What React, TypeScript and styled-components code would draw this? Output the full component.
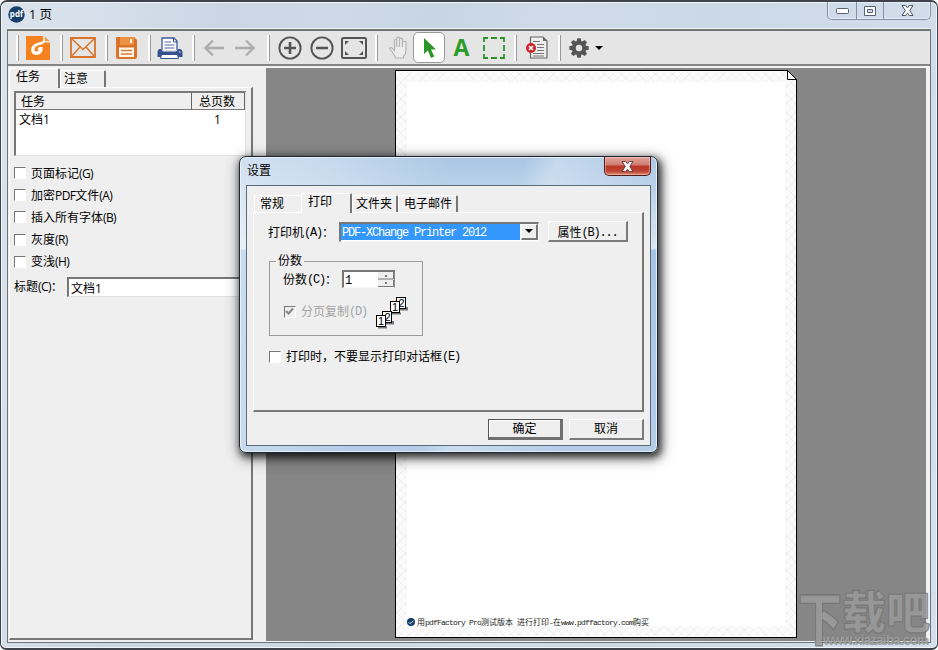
import React from "react";
import styled, { createGlobalStyle, css } from "styled-components";

const GlobalStyle = createGlobalStyle`
  * { box-sizing: border-box; }
  html, body { margin: 0; padding: 0; background: #fff; overflow: hidden; }
  body { font-family: "Liberation Sans", "Noto Sans CJK SC", sans-serif; font-size: 12px; color: #000; }
`;

type Face = "sans" | "mono" | "tiny";

const Latin = styled.span<{ $face: Face }>`
  ${(p) => p.$face === "sans" && css`font-family: "Open Sans", sans-serif; letter-spacing: -0.6px;`}
  ${(p) => p.$face === "mono" && css`font-family: "Liberation Mono", monospace; font-size: 12px; letter-spacing: -1.2px; position: relative; top: -1px;`}
  ${(p) => p.$face === "tiny" && css`font-family: "Liberation Mono", monospace; letter-spacing: -0.8px;`}
`;

const Run = styled.span`
  white-space: pre;
  font-family: "Noto Sans CJK SC", sans-serif;
`;

/* Splits mixed text so that Latin runs get their own face and spacing. */
function Mixed({ text, face = "sans" }: { text: string; face?: Face }) {
  return (
    <Run>
      {text.split(/([\x20-\x7e]+)/).filter(Boolean).map((s, i) =>
        /^[\x20-\x7e]/.test(s) ? <Latin key={i} $face={face}>{s}</Latin> : s
      )}
    </Run>
  );
}

/* ---------- main window ---------- */

const Window = styled.div`
  position: relative;
  width: 938px;
  height: 650px;
  border: 1px solid #3f444c;
  border-top-width: 2px;
  border-bottom-width: 2px;
  border-radius: 7px 7px 6px 6px;
  background: linear-gradient(100deg, #dbe3ec 0, #d5deea 110px, #cbd6e4 220px, #cdd9e6 330px, #c8d5e3 430px, #cfdbe8 560px, #cbd8e6 700px, #d4dfeb 100%);
  box-shadow: inset 0 0 0 1px #f1f5fa;
  padding: 0 6px 0 6px;
  display: flex;
  flex-direction: column;
  overflow: hidden;
`;

const TitleBar = styled.div`
  height: 27px;
  flex: none;
  display: flex;
  align-items: flex-start;
`;

const AppBadge = styled.svg`
  margin: 4px 0 0 1px;
`;

const Title = styled.div`
  margin: 3px 0 0 4px;
  line-height: 19px;
  flex: 1;
  font-family: "Open Sans", "Noto Sans CJK SC", sans-serif;
  font-size: 12.5px;
`;

const Caption = styled.div`
  display: flex;
  width: 104px;
  height: 18px;
  border: 1px solid #8591a1;
  border-top: 0;
  border-radius: 0 0 5px 5px;
  box-shadow: inset 0 0 0 1px #e6ecf4;
  margin-right: 0;
`;

const CaptionButton = styled.div<{ $w: number }>`
  width: ${(p) => p.$w}px;
  display: flex;
  align-items: center;
  justify-content: center;
  & + & { border-left: 1px solid #8591a1; }
`;

const Client = styled.div`
  width: 924px;
  height: 614px;
  flex: none;
  border: 1px solid #6c747b;
  border-top: 2px solid #717871;
  background: #efefef;
  box-shadow: 0 -1px 0 #edf2f7;
  display: flex;
  flex-direction: column;
`;

const Toolbar = styled.div`
  height: 35px;
  flex: none;
  background: #e5e5e5;
  border-bottom: 2px solid #858585;
  display: flex;
  align-items: center;
`;

const Separator = styled.div<{ $gap: number }>`
  width: 3px;
  height: 26px;
  margin-left: ${(p) => p.$gap}px;
  border-left: 2px solid #fcfcfc;
  border-right: 1px solid #9a9a9a;
`;

const Tool = styled.div<{ $gap: number; $w: number; $active?: boolean }>`
  width: ${(p) => p.$w}px;
  height: 31px;
  margin-left: ${(p) => p.$gap}px;
  display: flex;
  align-items: center;
  justify-content: center;
  ${(p) => p.$active && css`background: #fff; border: 1px solid #999; border-radius: 5px;`}
`;

const LetterA = styled.span`
  font: bold 23px/30px "Open Sans", sans-serif;
  color: #2c9c28;
  height: 32px;
`;

const Body = styled.div`
  flex: 1;
  display: flex;
  padding: 2px 4px 1px 0;
  background: #f2f2f2;
`;

const Side = styled.div`
  width: 258px;
  flex: none;
  display: flex;
  flex-direction: column;
  background: #efefef;
`;

const SideTabs = styled.div`
  display: flex;
  align-items: flex-end;
  height: 20px;
  padding-left: 1px;
  position: relative;
  margin-bottom: -1px;
`;

const Tab = styled.div<{ $w: number; $active?: boolean; $h: number; $pad: number; $flat?: boolean }>`
  width: ${(p) => p.$w}px;
  height: ${(p) => p.$h}px;
  padding-left: ${(p) => p.$pad}px;
  line-height: 17px;
  border-top: 1px solid #fff;
  border-left: 1px solid #fff;
  border-right: ${(p) => (p.$flat ? "0" : "2px solid #777")};
  border-radius: 2px 2px 0 0;
  background: #efefef;
  overflow: hidden;
  white-space: nowrap;
  margin-bottom: ${(p) => (p.$active ? 0 : 1)}px;
`;

const SidePanel = styled.div`
  width: 244px;
  height: 553px;
  margin-left: 1px;
  border: 1px solid #fff;
  border-right: 2px solid #777;
  border-bottom: 2px solid #777;
  padding: 3px 5px 0 4px;
`;

const List = styled.div`
  width: 232px;
  height: 65px;
  border: 2px solid #787878;
  border-right: 1px solid #e2e2e2;
  border-bottom: 1px solid #e2e2e2;
  background: #fff;
`;

const ListRow = styled.div`
  display: grid;
  grid-template-columns: 176px 53px;
  height: 17px;
  line-height: 17px;
`;

const HeadCell = styled.div<{ $pad: number }>`
  background: #efefef;
  border-right: 1px solid #666;
  border-bottom: 1px solid #777;
  padding-left: ${(p) => p.$pad}px;
  line-height: 18px;
  overflow: hidden;
`;

const BodyCell = styled.div<{ $pad: number }>`
  padding-left: ${(p) => p.$pad}px;
  line-height: 18px;
`;

const Options = styled.div`
  display: grid;
  grid-auto-rows: 22.2px;
  margin-top: 6px;
`;

const CheckRow = styled.label<{ $dim?: boolean }>`
  display: flex;
  align-items: center;
  gap: 5px;
  line-height: 18px;
  color: ${(p) => (p.$dim ? "#a3a3a3" : "#000")};
  white-space: nowrap;
`;

const Box = styled.span<{ $dim?: boolean }>`
  width: 12px;
  height: 12px;
  flex: none;
  display: flex;
  border-top: 1.5px solid #777;
  border-left: 1.5px solid #777;
  border-right: 1px solid #fff;
  border-bottom: 1px solid #fff;
  background: ${(p) => (p.$dim ? "#efefef" : "#fff")};
`;

const TitleField = styled.div`
  display: flex;
  align-items: center;
  margin-top: 4px;
  line-height: 18px;
  white-space: nowrap;
`;

const TitleInput = styled.div`
  width: 179px;
  height: 20px;
  margin-left: auto;
  border: 2px solid #777;
  border-right: 0;
  border-bottom: 1px solid #e0e0e0;
  background: #fff;
  padding-left: 2px;
  line-height: 17px;
`;

const Viewport = styled.div`
  flex: 1;
  background: #868686;
  padding: 2px 0 0 129px;
`;

const Page = styled.div`
  width: 402px;
  height: 568px;
  border: 1px solid #000;
  padding: 11px;
  position: relative;
  background:
    repeating-linear-gradient(45deg, transparent 0 5px, rgba(120,120,120,0.06) 5px 6px),
    repeating-linear-gradient(-45deg, transparent 0 5px, rgba(120,120,120,0.06) 5px 6px),
    #fbfbfb;
`;

const Paper = styled.div`
  height: 544px;
  background: #fff;
  display: flex;
  align-items: flex-end;
`;

const Fold = styled.svg`
  position: absolute;
  right: -1px;
  top: -1px;
`;

const Footer = styled.div`
  display: flex;
  align-items: center;
  gap: 2px;
  height: 9px;
  font-size: 8px;
  line-height: 9px;
  color: #1b1b1b;
`;

const Watermark = styled.div`
  position: absolute;
  left: 797px;
  top: 585px;
  width: 134px;
  height: 60px;
  display: flex;
  flex-direction: column;
`;

const WatermarkName = styled.div`
  display: flex;
  height: 45px;
  font: 900 44px/46px "Noto Sans CJK SC", sans-serif;
  color: rgba(155, 155, 155, 0.85);
  -webkit-text-stroke: 1px rgba(108, 108, 108, 0.7);
  white-space: nowrap;
`;

const TallGlyph = styled.span`
  transform: scaleY(1.28);
  transform-origin: 0 4px;
`;

const WatermarkUrl = styled.div`
  margin-left: 25px;
  height: 15px;
  font: bold 13px/15px "Liberation Sans", sans-serif;
  letter-spacing: -0.6px;
  color: rgba(165, 165, 165, 0.85);
  text-shadow: 1px 1px 0 rgba(100, 100, 100, 0.5), -1px 0 0 rgba(100, 100, 100, 0.3);
`;

/* ---------- dialog ---------- */

const Dialog = styled.div`
  position: absolute;
  left: 238px;
  top: 154px;
  width: 419px;
  height: 297px;
  border: 1px solid #1d2733;
  border-radius: 7px;
  padding: 0 6px;
  background:
    linear-gradient(110deg, rgba(255,255,255,0.45) 0, rgba(255,255,255,0.3) 90px, rgba(255,255,255,0) 200px, rgba(255,255,255,0) 270px, rgba(255,255,255,0.3) 300px, rgba(255,255,255,0) 400px),
    linear-gradient(180deg, #abc7e5 0, #bed4eb 40px, #d9e5f2 92px, #a5c5e6 93px, #b4cde9 100%);
  box-shadow: inset 0 0 0 1px rgba(235, 244, 253, 0.85), 2px 3px 7px 1px rgba(0, 0, 0, 0.65), 2px 4px 14px 2px rgba(0, 0, 0, 0.45);
`;

const DialogHead = styled.div`
  display: flex;
  justify-content: space-between;
  height: 28px;
  padding-left: 1px;
  line-height: 28px;
`;

const CloseButton = styled.div`
  width: 47px;
  height: 19px;
  border: 1px solid #4d1c18;
  border-top: 0;
  border-radius: 0 0 5px 5px;
  background: linear-gradient(180deg, #dda79f 0, #cf7a6e 8px, #b7372a 9px, #bd4332 14px, #db8a70 100%);
  box-shadow: inset 0 0 0 1px rgba(255, 210, 200, 0.5);
  display: flex;
  align-items: center;
  justify-content: center;
`;

const DialogClient = styled.div`
  width: 405px;
  height: 261px;
  border: 1px solid #5c6a7a;
  background: #efefef;
  padding: 7px 6px 0;
`;

const DialogTabs = styled.div`
  display: flex;
  align-items: flex-end;
  height: 20px;
  padding-left: 1px;
  margin-bottom: -1px;
  position: relative;
`;

const DialogPanel = styled.div`
  width: 391px;
  height: 200px;
  border: 1px solid #fff;
  border-right: 2px solid #777;
  border-bottom: 2px solid #777;
  padding: 8px 14px 0 14px;
`;

const FieldRow = styled.div`
  display: flex;
  align-items: center;
  height: 21px;
  white-space: nowrap;
`;

const Label = styled.span<{ $w: number }>`
  width: ${(p) => p.$w}px;
  flex: none;
`;

const Combo = styled.div`
  width: 200px;
  height: 20px;
  border: 2px solid #777;
  border-right: 1px solid #f8f8f8;
  border-bottom: 1px solid #f8f8f8;
  background: #fff;
  display: flex;
`;

const Selected = styled.div`
  width: 179px;
  height: 16px;
  background: #3397fd;
  color: #fff;
  line-height: 16px;
  padding-left: 1px;
`;

const DropButton = styled.div`
  width: 17px;
  height: 16px;
  margin-left: 1px;
  background: #efefef;
  border: 1px solid #fff;
  border-right: 2px solid #777;
  border-bottom: 2px solid #777;
  display: flex;
  align-items: center;
  justify-content: center;
`;

const Button = styled.div<{ $w: number; $default?: boolean }>`
  width: ${(p) => p.$w}px;
  height: 21px;
  background: #efefef;
  border: 1px solid #fff;
  border-right: 2px solid #7b7b7b;
  border-bottom: 2px solid #7b7b7b;
  text-align: center;
  line-height: 19px;
  white-space: nowrap;
  ${(p) => p.$default && css`
    border: 1px solid #555;
    border-right: 3px solid #707070;
    border-bottom: 3px solid #707070;
    box-shadow: inset 1px 1px 0 #fff;
  `}
`;

const Group = styled.fieldset`
  width: 154px;
  height: 82px;
  margin: 12px 0 0 1px;
  padding: 0 0 0 13px;
  border: 1px solid #9b9b9b;
  min-width: 0;
`;

const Legend = styled.legend`
  margin-left: -7px;
  padding: 0 2px;
  line-height: 14px;
`;

const Spinner = styled.div`
  width: 53px;
  height: 18px;
  border: 2px solid #777;
  border-right: 1px solid #888;
  border-bottom: 1px solid #f8f8f8;
  background: #fff;
  display: flex;
  justify-content: space-between;
  line-height: 16px;
  padding-left: 1px;
`;

const CollateRow = styled.div`
  display: flex;
  justify-content: space-between;
  align-items: flex-end;
  height: 32px;
  margin-top: 8px;
  padding-right: 14px;
`;

const CollateOption = styled.div`
  padding-bottom: 7px;
  margin-left: 1px;
`;

const SkipRow = styled.div`
  margin: 11px 0 0 1px;
`;

const Actions = styled.div`
  display: flex;
  justify-content: flex-end;
  gap: 6px;
  margin: 7px 0 0 0;
`;

/* ---------- drawings ---------- */

const Arrow = ({ flip = false }: { flip?: boolean }) => (
  <svg width="20" height="18" viewBox="0 0 20 18">
    <path d="M9 1.5 1.5 9 9 16.5M1.5 9H20" fill="none" stroke="#adadad" strokeWidth="2.3" transform={flip ? "translate(20 0) scale(-1 1)" : undefined} />
  </svg>
);

const ZoomGlyph = ({ plus = false }: { plus?: boolean }) => (
  <svg width="24" height="24" viewBox="0 0 24 24">
    <circle cx="12" cy="12" r="10.6" fill="none" stroke="#555" strokeWidth="1.9" />
    <path d={plus ? "M6 12H18M12 6V18" : "M6 12H18"} stroke="#555" strokeWidth="2.6" />
  </svg>
);

const CloseGlyph = ({ color = "#4e5765" }: { color?: string }) => (
  <svg width="13" height="11" viewBox="0 0 13 11">
    <path d="M1 .5H4.700L6.500 2.800 8.300.500H12L8.800 5.500 12 10.500H8.300L6.500 8.200 4.700 10.500H1L4.200 5.500Z" fill="#f7f7f7" stroke={color} />
  </svg>
);

const gearTeeth = [0, 45, 90, 135, 180, 225, 270, 315];

function Tools() {
  return (
    <Toolbar>
      <Separator $gap={8} />
      <Tool $gap={7} $w={24}>
        <svg width="24" height="24" viewBox="0 0 24 24">
          <path d="M0 0H17V6.500H24V24H0Z" fill="#f6821f" />
          <path d="M19 .5 23.500 5H19Z" fill="#f79a46" />
          <path d="M19 4C15.500 6.500 10 6 6.500 10C4 13.500 5 18.500 10 19C14.500 19 17.500 15.500 16.500 11H13L11 13.500H13C12.500 15.500 9.500 16.500 8.500 14C8.500 11 11 9.500 13.500 9C16.500 8.500 18.500 7 19 4Z" fill="#fff" />
        </svg>
      </Tool>
      <Separator $gap={10} />
      <Tool $gap={7} $w={26}>
        <svg width="26" height="21" viewBox="0 0 26 21">
          <path d="M1 1H25V20H1Z" fill="none" stroke="#d9722b" strokeWidth="1.800" />
          <path d="M1.500 1.500 13 12.500 24.500 1.500M1.500 19.500 10 10M24.500 19.500 16 10" fill="none" stroke="#d9722b" strokeWidth="1.400" />
        </svg>
      </Tool>
      <Separator $gap={9} />
      <Tool $gap={8} $w={21}>
        <svg width="21" height="22" viewBox="0 0 21 22">
          <path d="M1 0H18L21 3V20Q21 22 19 22H2Q0 22 0 20V1Q0 0 1 0Z" fill="#da7328" />
          <path d="M4 0H18V8H4Z" fill="#ed9243" />
          <path d="M14 2H16V6H14Z" fill="#fff3df" />
          <path d="M3 10.500H18V20H3Z" fill="#fff7ec" />
          <path d="M5 13.500H16M5 17H16" stroke="#dc7c34" strokeWidth="1.300" />
        </svg>
      </Tool>
      <Separator $gap={11} />
      <Tool $gap={6} $w={26}>
        <svg width="26" height="22" viewBox="0 0 26 22">
          <path d="M5 13V1H17L20 4V13" fill="#fff" stroke="#3d5998" strokeWidth="1.300" />
          <path d="M16.500 1V5H20" fill="none" stroke="#3d5998" />
          <path d="M7.500 5H14M7.500 8H17.500M7.500 11H17.500" stroke="#4c66a3" />
          <path d="M2.500 12H4L6 14.500H19L21.500 12H23Q25.500 12.500 25.500 15V20H.5V15Q.5 12.500 2.500 12Z" fill="#35528f" />
          <path d="M4.500 17.500H20.500L21.500 21.500H3.500Z" fill="#fff" stroke="#35528f" />
          <path d="M22 15H23.500" stroke="#fff" strokeWidth="1.200" />
        </svg>
      </Tool>
      <Separator $gap={9} />
      <Tool $gap={9} $w={20}><Arrow /></Tool>
      <Tool $gap={11} $w={20}><Arrow flip /></Tool>
      <Separator $gap={12} />
      <Tool $gap={8} $w={24}><ZoomGlyph plus /></Tool>
      <Tool $gap={8} $w={24}><ZoomGlyph /></Tool>
      <Tool $gap={7} $w={26}>
        <svg width="26" height="22" viewBox="0 0 26 22">
          <rect x="1" y="1" width="24" height="20" rx="1.500" fill="none" stroke="#555" strokeWidth="2" />
          <path d="M4 4H8L4 8ZM18 4H22V8ZM4 14V18H8ZM22 14V18H18Z" fill="#555" />
        </svg>
      </Tool>
      <Separator $gap={8} />
      <Tool $gap={11} $w={19}>
        <svg width="19" height="23" viewBox="0 0 19 23">
          <path d="M6.500 22C5.500 18 2 15 .8 12.500Q1.500 10.500 4 13L5.500 14.500V4Q6.500 2.500 7.700 4V11V2Q9 .2 10.500 2V11V3Q12 1.500 13.500 3V11V6Q15 4.500 17 6V15Q17 18 14.500 20.500V22Z" fill="#ececec" stroke="#b4b4b4" strokeWidth="1.200" />
        </svg>
      </Tool>
      <Tool $gap={5} $w={32} $active>
        <svg width="13" height="20" viewBox="0 0 13 20">
          <path d="M1 0V16L4.800 12.500 8 20 11.300 18.500 8 11.500H13Z" fill="#2b9728" />
        </svg>
      </Tool>
      <Tool $gap={8} $w={17}><LetterA>A</LetterA></Tool>
      <Tool $gap={12} $w={23}>
        <svg width="22" height="22" viewBox="0 0 22 22">
          <path d="M1 5V1H5M8 1H14M17 1H21V5M21 8V14M21 17V21H17M14 21H8M5 21H1V17M1 14V8" fill="none" stroke="#279527" strokeWidth="1.800" />
        </svg>
      </Tool>
      <Separator $gap={9} />
      <Tool $gap={9} $w={22}>
        <svg width="22" height="23" viewBox="0 0 22 23">
          <path d="M4.500 1H17L21 5V22H4.500Z" fill="#eee" stroke="#666" strokeWidth="1.200" />
          <path d="M17 1V5H21Z" fill="#666" />
          <path d="M7 5.500H14M11 8.500H18M11 11.500H18M11 14.500H18M7 17.500H18M7 20H18" stroke="#777" />
          <circle cx="5" cy="12" r="5" fill="#cd2028" />
          <path d="M3 10 7 14M7 10 3 14" stroke="#fff" strokeWidth="1.700" />
        </svg>
      </Tool>
      <Separator $gap={10} />
      <Tool $gap={8} $w={20}>
        <svg width="20" height="20" viewBox="-10 -10 20 20">
          {gearTeeth.map((a) => <path key={a} d="M-2.500-6-1.700-9.700H1.700L2.500-6Z" transform={`rotate(${a})`} fill="#555" />)}
          <circle r="5.200" fill="none" stroke="#555" strokeWidth="4" />
        </svg>
      </Tool>
      <Tool $gap={6} $w={8}>
        <svg width="8" height="4"><path d="M0 0H8L4 4Z" /></svg>
      </Tool>
    </Toolbar>
  );
}

const Digit = styled.text`
  font: 11px "Liberation Sans", sans-serif;
`;

const BadgeText = styled.text`
  font: bold 8px "Open Sans", sans-serif;
  fill: #fff;
`;

const CollateSheets = ({ x, y }: { x: number; y: number }) => (
  <g transform={`translate(${x} ${y})`}>
    <path d="M8 12.500H17V10" fill="none" stroke="#777" strokeWidth="2" />
    <rect x="6.500" y=".5" width="9" height="11" fill="#fff" stroke="#000" />
    <Digit x="8.500" y="10">2</Digit>
    <path d="M2 16.500H11" stroke="#777" strokeWidth="2" />
    <rect x=".5" y="4.500" width="9" height="11" fill="#fff" stroke="#000" />
    <Digit x="2" y="14">1</Digit>
  </g>
);

const options = ["页面标记(G)", "加密PDF文件(A)", "插入所有字体(B)", "灰度(R)", "变浅(H)"];

function SidePane() {
  return (
    <Side>
      <SideTabs>
        <Tab $w={51} $h={20} $pad={6} $active>任务</Tab>
        <Tab $w={46} $h={17} $pad={3}>注意</Tab>
      </SideTabs>
      <SidePanel>
        <List>
          <ListRow>
            <HeadCell $pad={5}>任务</HeadCell>
            <HeadCell $pad={7}>总页数</HeadCell>
          </ListRow>
          <ListRow>
            <BodyCell $pad={3}><Mixed text="文档1" /></BodyCell>
            <BodyCell $pad={22}><Mixed text="1" /></BodyCell>
          </ListRow>
        </List>
        <Options>
          {options.map((o) => (
            <CheckRow key={o}><Box /><Mixed text={o} /></CheckRow>
          ))}
        </Options>
        <TitleField>
          <Mixed text="标题(C)：" />
          <TitleInput><Mixed text="文档1" /></TitleInput>
        </TitleField>
      </SidePanel>
    </Side>
  );
}

function SettingsDialog() {
  return (
    <Dialog>
      <DialogHead>
        <span>设置</span>
        <CloseButton><CloseGlyph color="#713e3c" /></CloseButton>
      </DialogHead>
      <DialogClient>
        <DialogTabs>
          <Tab $w={47} $h={17} $pad={5} $flat>常规</Tab>
          <Tab $w={51} $h={20} $pad={6} $active>打印</Tab>
          <Tab $w={46} $h={17} $pad={3}>文件夹</Tab>
          <Tab $w={60} $h={17} $pad={5}>电子邮件</Tab>
        </DialogTabs>
        <DialogPanel>
          <FieldRow>
            <Label $w={71}><Mixed text="打印机(A)：" face="mono" /></Label>
            <Combo>
              <Selected><Mixed text="PDF-XChange Printer 2012" face="mono" /></Selected>
              <DropButton>
                <svg width="8" height="4"><path d="M0 0H8L4 4Z" /></svg>
              </DropButton>
            </Combo>
            <Label $w={9} />
            <Button $w={80}><Mixed text="属性(B)..." face="mono" /></Button>
          </FieldRow>
          <Group>
            <Legend>份数</Legend>
            <FieldRow>
              <Label $w={59}><Mixed text="份数(C)：" face="mono" /></Label>
              <Spinner>
                <Mixed text="1" face="mono" />
                <svg width="16" height="15">
                  <path d="M0 0H16V15H0Z" fill="#efefef" />
                  <path d="M0 7H15.500V0M0 14.500H15.500V8" fill="none" stroke="#777" />
                  <path d="M7 4H9M7 11H9" stroke="#000" />
                </svg>
              </Spinner>
            </FieldRow>
            <CollateRow>
              <CollateOption>
                <CheckRow $dim>
                  <Box $dim>
                    <svg width="9" height="9"><path d="M1 4 3.500 6.500 8 1.500" fill="none" stroke="#888" strokeWidth="2" /></svg>
                  </Box>
                  <Mixed text="分页复制(D)" face="mono" />
                </CheckRow>
              </CollateOption>
              <svg width="32" height="33">
                <CollateSheets x={14} y={1} />
                <CollateSheets x={0} y={15} />
              </svg>
            </CollateRow>
          </Group>
          <SkipRow>
            <CheckRow><Box /><Mixed text="打印时，不要显示打印对话框(E)" face="mono" /></CheckRow>
          </SkipRow>
        </DialogPanel>
        <Actions>
          <Button $w={75} $default>确定</Button>
          <Button $w={75}>取消</Button>
        </Actions>
      </DialogClient>
    </Dialog>
  );
}

export default function App() {
  return (
    <>
      <GlobalStyle />
      <Window>
        <TitleBar>
          <AppBadge width="17" height="17" viewBox="0 0 17 17">
            <circle cx="8.500" cy="8.500" r="8.200" fill="#173f69" />
            <BadgeText x="1.700" y="11" textLength="13.500">pdf</BadgeText>
          </AppBadge>
          <Title>1 页</Title>
          <Caption>
            <CaptionButton $w={28}>
              <svg width="13" height="6"><rect x=".5" y=".5" width="12" height="5" rx="1" fill="#fff" stroke="#586170" /></svg>
            </CaptionButton>
            <CaptionButton $w={27}>
              <svg width="12" height="10"><path d="M.5.500H11.500V9.500H.5ZM3.500 3.500V6.500H8.500V3.500Z" fill="#fff" fillRule="evenodd" stroke="#586170" /></svg>
            </CaptionButton>
            <CaptionButton $w={47}><CloseGlyph /></CaptionButton>
          </Caption>
        </TitleBar>
        <Client>
          <Tools />
          <Body>
            <SidePane />
            <Viewport>
              <Page>
                <Paper>
                  <Footer>
                    <svg width="8" height="8"><circle cx="4" cy="4" r="4" fill="#173f69" /><path d="M1.500 4.500 3 5.500 6.500 3" fill="none" stroke="#cfe0ee" /></svg>
                    <Mixed text="用pdfFactory Pro测试版本 进行打印-在www.pdffactory.com购买" face="tiny" />
                  </Footer>
                </Paper>
                <Fold width="10" height="10">
                  <path d="M0 0H10V10Z" fill="#868686" />
                  <path d="M.5.500V9.500H9.500Z" fill="#fff" stroke="#000" />
                </Fold>
              </Page>
            </Viewport>
          </Body>
        </Client>
        <SettingsDialog />
        <Watermark>
          <WatermarkName><TallGlyph>下</TallGlyph>载吧</WatermarkName>
          <WatermarkUrl>www.xiazaiba.com</WatermarkUrl>
        </Watermark>
      </Window>
    </>
  );
}
